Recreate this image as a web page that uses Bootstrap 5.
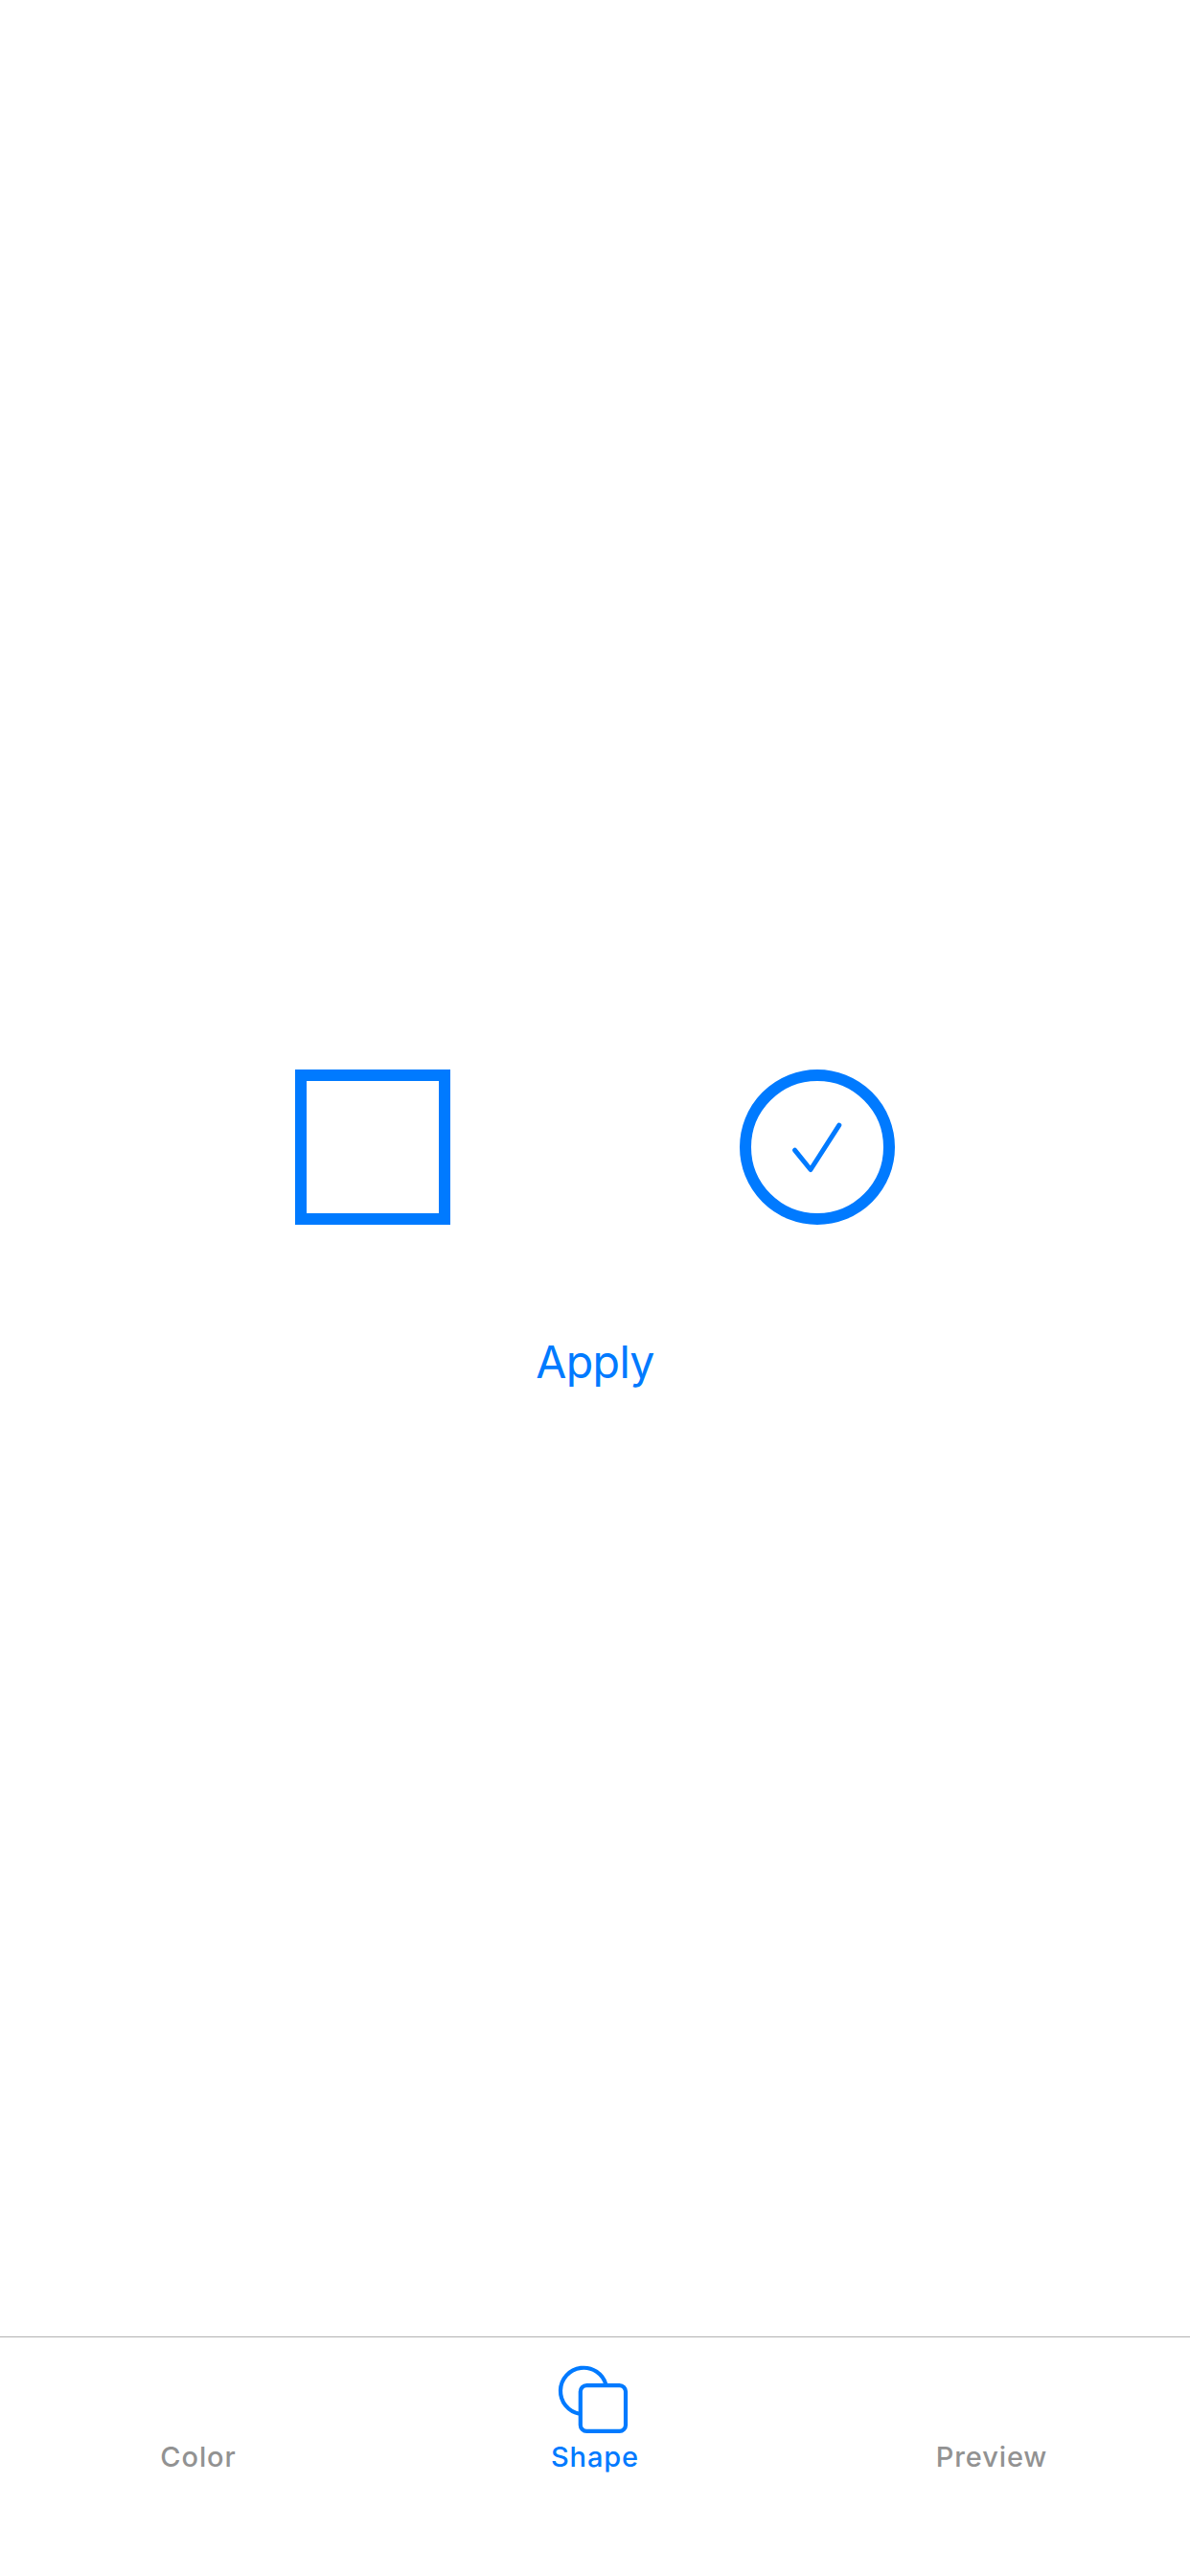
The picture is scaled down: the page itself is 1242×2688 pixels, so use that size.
<!DOCTYPE html>
<html lang="en">
<head>
<meta charset="utf-8">
<meta name="viewport" content="width=device-width, initial-scale=1">
<title>Shape</title>
<link href="https://cdn.jsdelivr.net/npm/bootstrap@5.3.0/dist/css/bootstrap.min.css" rel="stylesheet">
<style>
body { font-family: Inter, "Liberation Sans", sans-serif; --tint: #007aff; }
.choices { gap: 302px; padding-top: 1116px; }
.choice { width: 162px; height: 162px; border: 12px solid var(--tint); background: #fff; }
.apply-btn, .apply-btn:hover { color: var(--tint); font-size: 46.5px; line-height: 56px; letter-spacing: -.6px; margin-top: 115px; }
.tabs { height: 250px; border-top: 1px solid #b2b2b2; }
.tabs .nav-link { color: #929292; font-size: 29px; line-height: 36px; font-weight: 500; letter-spacing: .9px; padding: 29px 0 0; }
.tabs .nav-link.active { color: var(--tint); }
.tab-icon { width: 74px; height: 78px; overflow: visible; }
</style>
<script src="https://cdn.jsdelivr.net/npm/bootstrap@5.3.0/dist/js/bootstrap.bundle.min.js"></script>
</head>
<body class="bg-white vh-100 d-flex flex-column overflow-hidden">
<main class="flex-grow-1 d-flex flex-column align-items-center">
  <div class="choices d-flex justify-content-center">
    <button type="button" class="choice p-0" aria-label="Square"></button>
    <button type="button" class="choice p-0 rounded-circle" aria-label="Circle">
      <svg class="d-block" width="138" height="138" viewBox="0 0 138 138" fill="none" stroke="#007aff" stroke-width="5" stroke-linecap="round" stroke-linejoin="round"><path d="M45.5 72.2 62 92.5 91.8 46.2"/></svg>
    </button>
  </div>
  <button type="button" class="btn p-0 border-0 apply-btn">Apply</button>
</main>
<nav class="tabs nav nav-justified flex-nowrap">
  <a class="nav-link d-flex flex-column align-items-center" href="#"><span class="tab-icon"></span>Color</a>
  <a class="nav-link active d-flex flex-column align-items-center" href="#">
    <svg class="tab-icon" viewBox="0 0 74 78" fill="none" stroke="#007aff" stroke-width="4.2"><path d="M48.5 20.5A24.2 24.2 0 1 0 21 50.8"/><rect x="21.8" y="21.1" width="47.2" height="47.8" rx="6.5"/></svg>Shape</a>
  <a class="nav-link d-flex flex-column align-items-center" href="#"><span class="tab-icon"></span>Preview</a>
</nav>
</body>
</html>
